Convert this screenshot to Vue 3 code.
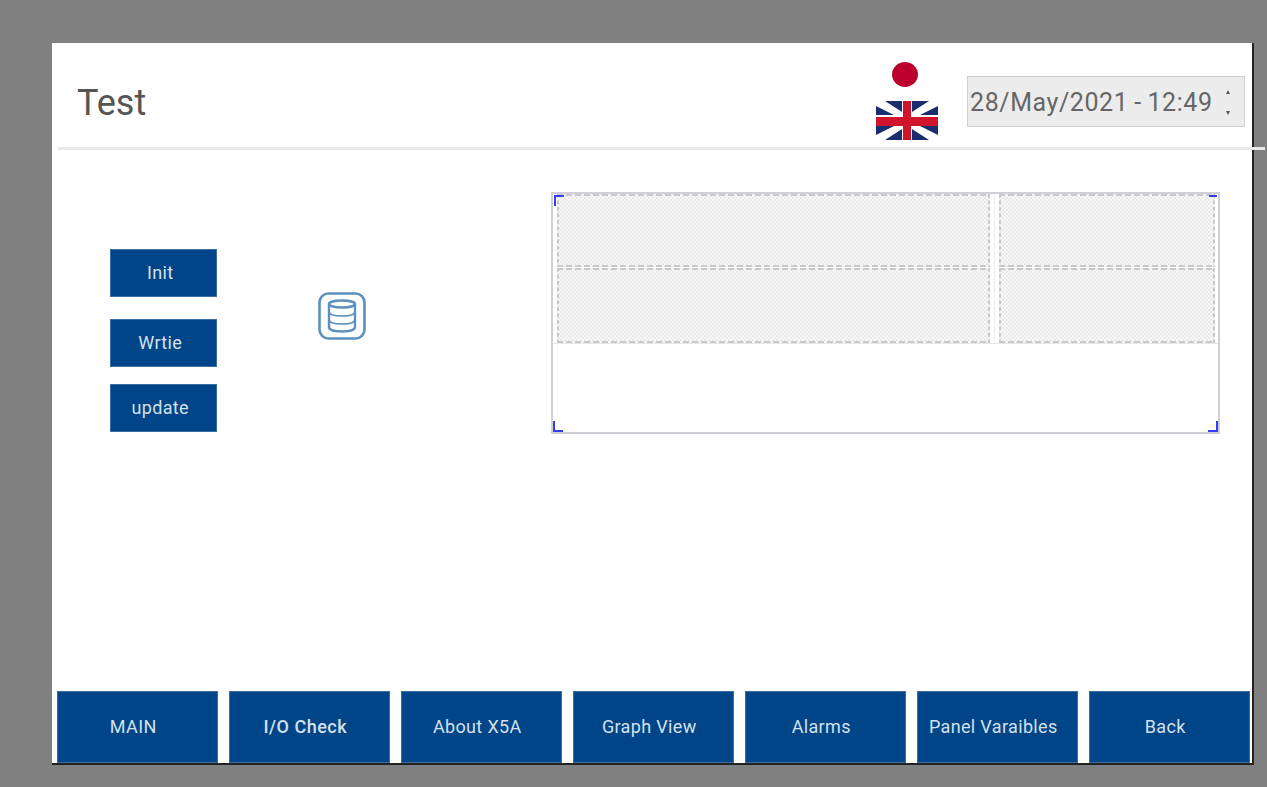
<script setup>
const sideButtons = [
  { label: "Init", cls: "init" },
  { label: "Wrtie", cls: "write" },
  { label: "update", cls: "update" },
];
const navButtons = ["MAIN", "I/O Check", "About X5A", "Graph View", "Alarms", "Panel Varaibles", "Back"];
const cells = ["a", "b", "c", "d"];
</script>

<template>
  <div class="panel">
    <div class="header">
      <div class="title">Test</div>
      <div class="langs">
        <span class="jp"></span>
        <svg class="uk" viewBox="0 0 62 39" width="62" height="39">
          <path d="M0 5 L18 14 H0 Z M9 0 H26 V11 Z M36 0 H53 L36 11 Z M62 5 V14 H44 Z" fill="#1a2d6e" />
          <path d="M0 34 L18 25 H0 Z M9 39 H26 V28 Z M36 39 H53 L36 28 Z M62 34 V25 H44 Z" fill="#1a2d6e" />
          <path d="M27 0 H35 V16 H62 V25 H35 V39 H27 V25 H0 V16 H27 Z" fill="#cf142b" />
        </svg>
      </div>
      <div class="datebox">
        <span class="datetext">28/May/2021 - 12:49</span>
        <span class="spin"><i class="up"></i><i class="down"></i></span>
      </div>
    </div>

    <div class="main">
      <div class="side">
        <button v-for="b in sideButtons" :key="b.label" class="btn" :class="b.cls">{{ b.label }}</button>
      </div>
      <svg class="dbicon" viewBox="0 0 48 48" width="48" height="48" fill="none" stroke="#5b90bf">
        <rect x="1.5" y="1.5" width="45" height="45" rx="9" stroke-width="2.6" />
        <ellipse cx="24" cy="12" rx="13" ry="3.500" stroke-width="2.4" />
        <path d="M11 12 V35 C11 38 17 39.500 24 39.500 C31 39.500 37 38 37 35 V12" stroke-width="2.4" />
        <path d="M11 19.500 C11 22.500 17 24 24 24 C31 24 37 22.500 37 19.500 M11 27.500 C11 30.500 17 32 24 32 C31 32 37 30.500 37 27.500" stroke-width="1.6" />
      </svg>
      <div class="table">
        <div class="grid">
          <div v-for="c in cells" :key="c" class="cell" :class="c"></div>
        </div>
        <span class="corner tl"></span>
        <span class="corner tr"></span>
        <span class="corner bl"></span>
        <span class="corner br"></span>
      </div>
    </div>

    <div class="nav">
      <button v-for="n in navButtons" :key="n" class="btn navbtn" :class="{ active: n === 'I/O Check' }">{{ n }}</button>
    </div>
  </div>
</template>

<style>
html, body {
  margin: 0;
  background: #808080;
  overflow: hidden;
}
</style>

<style scoped>
.panel {
  position: relative;
  box-sizing: border-box;
  width: 1202px;
  height: 722px;
  margin: 43px 0 0 52px;
  background: #fff;
  border-right: 2px solid #222;
  border-bottom: 2px solid #222;
  display: flex;
  flex-direction: column;
  font-family: Roboto, "Liberation Sans", sans-serif;
}
.header {
  box-sizing: border-box;
  height: 107px;
  margin-left: 6px;
  margin-right: -13px;
  border-bottom: 3px solid #e8e8e8;
  display: flex;
  align-items: flex-start;
}
.title {
  margin: 39px 0 0 19px;
  font-size: 36px;
  line-height: 42px;
  color: #555;
}
.langs {
  margin: 19px 0 0 auto;
  width: 62px;
  display: flex;
  flex-direction: column;
  align-items: center;
}
.jp {
  width: 26px;
  height: 25px;
  margin-left: -5px;
  border-radius: 50%;
  background: #bc002d;
}
.uk {
  margin-top: 14px;
  display: block;
}
.datebox {
  box-sizing: border-box;
  width: 278px;
  height: 51px;
  margin: 33px 20px 0 29px;
  padding: 2px 14px 0 2px;
  background: #ececec;
  border: 1px solid #d0d0d0;
  display: flex;
  align-items: center;
  justify-content: space-between;
}
.datetext {
  font-size: 25px;
  letter-spacing: 0.58px;
  word-spacing: -1px;
  color: #666;
  white-space: nowrap;
}
.spin {
  display: flex;
  flex-direction: column;
  gap: 17px;
  align-items: center;
}
.spin i {
  display: block;
  width: 0;
  height: 0;
  border-left: 2.5px solid transparent;
  border-right: 2.5px solid transparent;
}
.up {
  border-bottom: 4px solid #555;
}
.down {
  border-top: 4px solid #555;
}
.main {
  flex: 1;
  display: flex;
  align-items: flex-start;
}
.side {
  width: 108px;
  margin: 99px 0 0 57.5px;
  display: flex;
  flex-direction: column;
}
.btn {
  box-sizing: border-box;
  border: 1px solid #3a6fa6;
  border-radius: 0;
  padding: 0 0 2px;
  background: #004587;
  color: #d4e0ec;
  font-family: inherit;
  font-size: 18px;
  letter-spacing: 0.35px;
}
.side .btn {
  width: 107.5px;
  height: 48px;
  padding: 0 6px 2px 0;
}
.side .btn.write {
  margin-top: 22px;
}
.side .btn.update {
  margin-top: 17px;
}
.dbicon {
  margin: 142px 0 0 100.5px;
  flex: none;
}
.table {
  position: relative;
  box-sizing: border-box;
  width: 669px;
  height: 242px;
  margin: 42px 0 0 184.5px;
  border: 2px solid #cfcfd6;
  flex: none;
}
.grid {
  display: grid;
  grid-template-columns: 433px 216px;
  grid-template-rows: 73px 75px;
  column-gap: 9px;
  row-gap: 1px;
  padding-left: 4px;
  border-bottom: 1px solid #e6e6e6;
  background: linear-gradient(#ececec, #ececec) no-repeat 441px 0 / 1px 100%;
}
.cell {
  --dash: #c8c8c8;
  background-color: #f8f8f8;
  background-image:
    linear-gradient(90deg, var(--dash) 6px, transparent 6px),
    linear-gradient(90deg, var(--dash) 6px, transparent 6px),
    linear-gradient(var(--dash) 4px, transparent 4px),
    linear-gradient(var(--dash) 4px, transparent 4px),
    linear-gradient(45deg, transparent 42%, #e9e9e9 42% 58%, transparent 58%),
    linear-gradient(-45deg, transparent 42%, #e9e9e9 42% 58%, transparent 58%);
  background-size: 9px 2px, 9px 2px, 2px 6.5px, 2px 6.5px, 4px 4px, 4px 4px;
  background-position: 0 0, 0 100%, 0 0, 100% 0, 0 0, 0 0;
  background-repeat: repeat-x, repeat-x, repeat-y, repeat-y, repeat, repeat;
}
.corner {
  position: absolute;
  width: 8px;
  height: 9px;
  border: 0 solid #3a3aff;
}
.tl {
  left: 1px;
  top: 1px;
  border-left-width: 2px;
  border-top-width: 2px;
}
.tr {
  right: 1px;
  top: 1px;
  height: 0;
  border-top-width: 2px;
}
.bl {
  left: 0;
  bottom: 0;
  border-left-width: 2px;
  border-bottom-width: 2px;
}
.br {
  right: 0;
  bottom: 0;
  border-right-width: 2px;
  border-bottom-width: 2px;
}
.nav {
  display: grid;
  grid-template-columns: repeat(7, 160.5px);
  column-gap: 11.5px;
  padding-left: 5px;
  height: 72px;
}
.navbtn {
  height: 72px;
  padding-right: 8px;
}
.active {
  font-weight: 500;
  letter-spacing: 0.5px;
}
</style>
